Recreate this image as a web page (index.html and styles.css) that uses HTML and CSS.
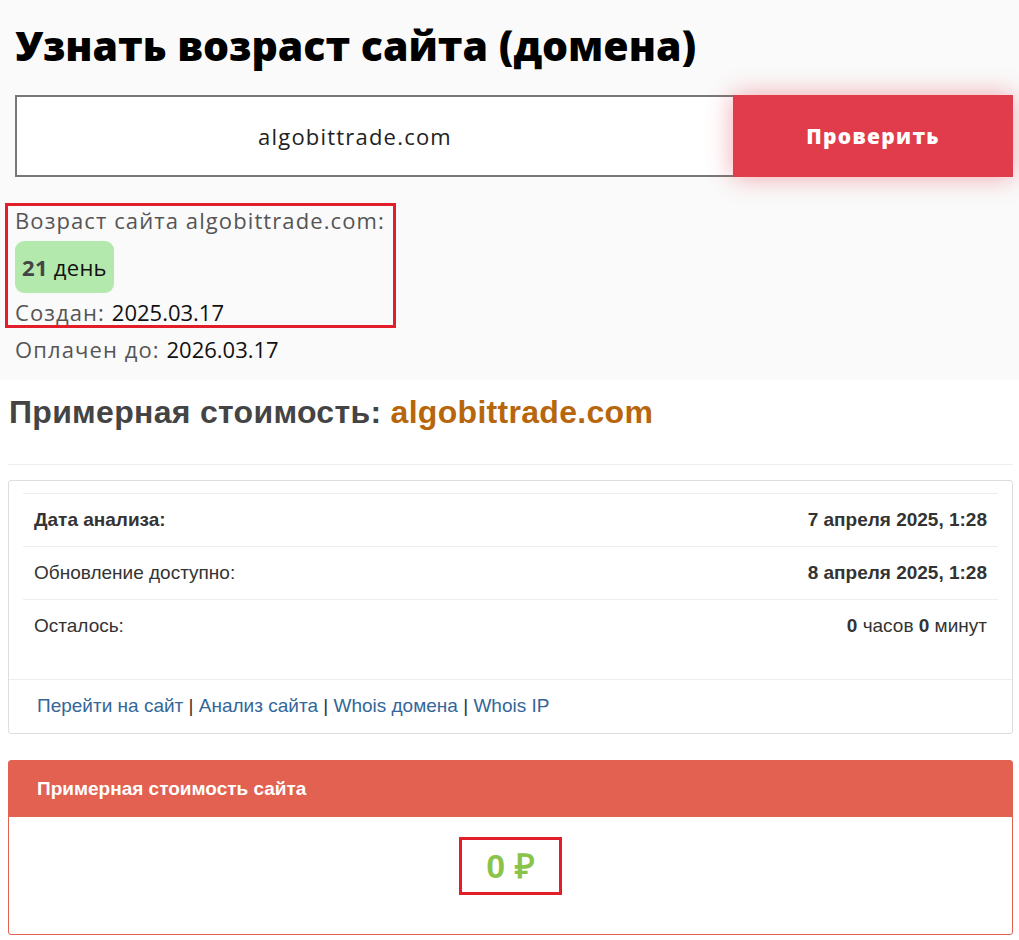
FILE: index.html
```html
<!DOCTYPE html>
<html lang="ru">
<head>
  <meta charset="UTF-8">
  <title>Узнать возраст сайта</title>
  <link rel="stylesheet" href="styles.css">
</head>
<body>
  <!-- Проверка возраста домена -->
  <section class="age-section">
    <h1 class="age-title">Узнать возраст сайта (домена)</h1>
    <form class="age-form" onsubmit="return false;">
      <input class="age-input" type="text" value="algobittrade.com">
      <button class="age-button" type="submit">Проверить</button>
    </form>
    <div class="age-result">
      <p class="age-line age-first">Возраст сайта algobittrade.com:</p>
      <div class="age-badge"><b>21</b> день</div>
      <p class="age-line age-last">Создан: <span class="age-value">2025.03.17</span></p>
    </div>
    <p class="age-line age-paid">Оплачен до: <span class="age-value">2026.03.17</span></p>
  </section>

  <!-- Оценка стоимости -->
  <section class="cost-section">
    <h2 class="cost-title">Примерная стоимость: <span class="cost-domain">algobittrade.com</span></h2>
    <hr class="cost-hr">
    <div class="panel">
      <div class="panel-body">
        <table class="info-table">
          <tr>
            <th>Дата анализа:</th>
            <td><b>7 апреля 2025, 1:28</b></td>
          </tr>
          <tr>
            <td>Обновление доступно:</td>
            <td><b>8 апреля 2025, 1:28</b></td>
          </tr>
          <tr>
            <td>Осталось:</td>
            <td><b>0</b> часов <b>0</b> минут</td>
          </tr>
        </table>
      </div>
      <div class="panel-footer">
        <a href="#">Перейти на сайт</a> | <a href="#">Анализ сайта</a> | <a href="#">Whois домена</a> | <a href="#">Whois IP</a>
      </div>
    </div>

    <div class="panel panel-danger">
      <div class="panel-heading">Примерная стоимость сайта</div>
      <div class="panel-price">
        <span class="price">0 ₽</span>
      </div>
    </div>
  </section>
</body>
</html>
```

FILE: styles.css
```css
* {
  box-sizing: border-box;
}
body {
  margin: 0;
  background: #fff;
  font-family: "Liberation Sans", Arial, sans-serif;
  color: #333;
}
/* верхний блок */
.age-section {
  background: #fafafa;
  padding: 18px 6px 16px 15px;
  font-family: "Open Sans", "Noto Sans", sans-serif;
}
.age-title {
  margin: 0 0 23px;
  font-size: 41px;
  font-weight: 800;
  line-height: 54px;
  color: #000;
}
.age-form {
  display: flex;
  height: 82px;
  margin-bottom: 26px;
}
.age-input {
  flex: 1;
  height: 100%;
  border: 2px solid #777;
  border-right: none;
  background: #fff;
  font-family: inherit;
  font-size: 22px;
  letter-spacing: 1.2px;
  color: #222;
  text-align: center;
  padding: 0 40px 0 0;
}
.age-button {
  width: 280px;
  height: 100%;
  border: none;
  background: #e03c4b;
  color: #fff;
  font-family: inherit;
  font-size: 21px;
  font-weight: 800;
  letter-spacing: 1.3px;
  box-shadow: 0 0 24px rgba(224, 60, 75, 0.45);
  cursor: pointer;
}
.age-result {
  display: inline-block;
  margin: 0 0 0 -10px;
  padding: 0 8px 0 7px;
  border: 3px solid #e31e2b;
}
.age-line {
  margin: 0;
  font-size: 22px;
  letter-spacing: 1.1px;
  line-height: 30px;
  color: #555;
}
.age-first {
  line-height: 28px;
}
.age-last {
  line-height: 26px;
}
.age-value {
  color: #111;
  letter-spacing: 0;
}
.age-badge {
  display: inline-block;
  margin: 7px 0 6px;
  padding: 0 7px;
  height: 52px;
  line-height: 52px;
  border-radius: 9px;
  background: #b4e9ae;
  font-size: 22px;
  letter-spacing: 0.3px;
  color: #111;
}
.age-badge b {
  color: #444;
}
.age-paid {
  margin-top: 6px;
}
/* нижний блок */
.cost-section {
  padding: 9px 6px 0 8px;
}
.cost-title {
  margin: 0 0 0 1px;
  font-size: 32px;
  letter-spacing: 0.3px;
  line-height: 46px;
  color: #444;
}
.cost-domain {
  color: #b8660b;
}
.cost-hr {
  margin: 29px 0 15px;
  border: 0;
  border-top: 1px solid #eee;
}
.panel {
  border: 1px solid #ddd;
  border-radius: 3px;
  margin-bottom: 26px;
  background: #fff;
}
.panel-body {
  padding: 12px 14px 26px;
}
.info-table {
  width: 100%;
  border-collapse: collapse;
  font-size: 19px;
}
.info-table th,
.info-table td {
  border-top: 1px solid #eee;
  padding: 0 11px;
  height: 53px;
  text-align: left;
  font-weight: normal;
  color: #333;
}
.info-table th {
  font-weight: bold;
}
.info-table td:last-child {
  text-align: right;
}
.panel-footer {
  border-top: 1px solid #eee;
  padding: 15px 28px 16px;
  font-size: 19px;
  color: #333;
}
.panel-footer a {
  color: #336699;
  text-decoration: none;
}
.panel-danger {
  border-color: #e36151;
}
.panel-heading {
  background: #e36151;
  color: #fff;
  font-weight: bold;
  font-size: 19px;
  height: 56px;
  line-height: 56px;
  padding: 0 28px;
}
.panel-price {
  display: flex;
  justify-content: center;
  padding: 20px 0 39px;
}
.price {
  padding: 6px 24px;
  border: 3px solid #e31e2b;
  color: #8bc34a;
  font-size: 34px;
  line-height: 40px;
  font-weight: bold;
}
```
